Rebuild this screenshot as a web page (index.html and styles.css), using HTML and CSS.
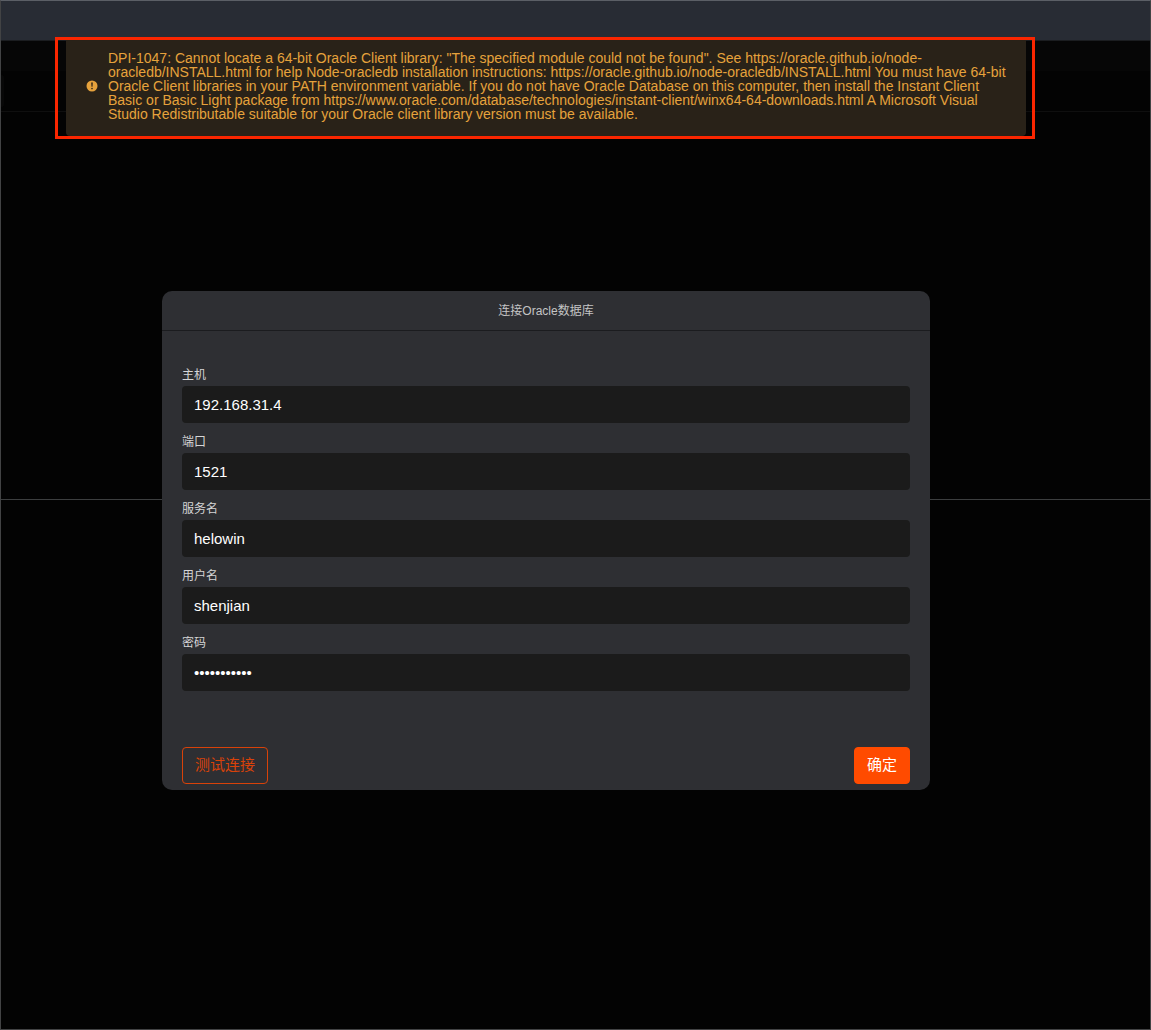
FILE: index.html
```html
<!DOCTYPE html>
<html lang="zh-CN">
<head>
    <meta charset="UTF-8">
    <meta name="viewport" content="width=device-width, initial-scale=1.0">
    <title>连接Oracle数据库</title>
    <link rel="stylesheet" href="styles.css">
</head>
<body>
    <div class="window">
        <header class="titlebar"></header>
        <main class="workspace">
            <div class="tabs"></div>
            <div class="toolbar"><span class="toolbar-item"></span></div>
            <div class="pane"></div>
            <div class="pane"></div>
        </main>
    </div>

    <div class="message-layer">
        <div class="highlight">
            <div class="message" role="alert">
                <svg class="message-icon" viewBox="0 0 12 12" aria-hidden="true">
                    <circle cx="6" cy="6" r="5.5" fill="#e6a23c"/>
                    <path d="M5.2 2.6h1.6L6.5 6.8h-1z" fill="#292218"/>
                    <circle cx="6" cy="8.6" r="0.8" fill="#292218"/>
                </svg>
                <p class="message-text">DPI-1047: Cannot locate a 64-bit Oracle Client library: "The specified module could not be found". See https://oracle.github.io/node-oracledb/INSTALL.html for help Node-oracledb installation instructions: https://oracle.github.io/node-oracledb/INSTALL.html You must have 64-bit Oracle Client libraries in your PATH environment variable. If you do not have Oracle Database on this computer, then install the Instant Client Basic or Basic Light package from https://www.oracle.com/database/technologies/instant-client/winx64-64-downloads.html A Microsoft Visual Studio Redistributable suitable for your Oracle client library version must be available.</p>
            </div>
        </div>
    </div>

    <div class="dialog-layer">
        <form class="dialog">
            <h1 class="dialog-title">连接Oracle数据库</h1>
            <div class="dialog-body">
                <div class="field">
                    <label for="host">主机</label>
                    <input type="text" id="host" value="192.168.31.4">
                </div>
                <div class="field">
                    <label for="port">端口</label>
                    <input type="text" id="port" value="1521">
                </div>
                <div class="field">
                    <label for="service">服务名</label>
                    <input type="text" id="service" value="helowin">
                </div>
                <div class="field">
                    <label for="user">用户名</label>
                    <input type="text" id="user" value="shenjian">
                </div>
                <div class="field">
                    <label for="password">密码</label>
                    <input type="password" id="password" value="helowin1521">
                </div>
            </div>
            <div class="dialog-footer">
                <button type="button" class="btn btn-outline">测试连接</button>
                <button type="submit" class="btn btn-primary">确定</button>
            </div>
        </form>
    </div>
</body>
</html>
```

FILE: styles.css
```css
* {
    box-sizing: border-box;
}

body {
    margin: 0;
    font-family: "Liberation Sans", "Noto Sans CJK SC", sans-serif;
    background-color: #030303;
    color: #fff;
}

.window {
    display: flex;
    flex-direction: column;
    height: 100vh;
    border: 1px solid #424344;
    border-top-color: #5b5f66;
}

.titlebar {
    height: 40px;
    background-color: #282c34;
    border-bottom: 1px solid #1b1d20;
}

.workspace {
    flex: 1;
    display: flex;
    flex-direction: column;
}

.tabs {
    height: 30px;
    background-color: #060606;
}

.toolbar {
    display: flex;
    height: 41px;
    padding: 4px 0;
    border-bottom: 1px solid #0f0f0f;
}

.toolbar-item {
    width: 3px;
    background-color: #080808;
    border-radius: 0 3px 3px 0;
}

.pane {
    flex: 1;
}

.pane + .pane {
    flex: 0 0 530px;
    border-top: 1px solid #3c3e3f;
}

.message-layer,
.dialog-layer {
    position: absolute;
    top: 0;
    left: 0;
    right: 0;
    display: flex;
    justify-content: center;
}

/* error message with its red frame */
.message-layer {
    padding-top: 37px;
    padding-right: 61px;
    z-index: 2;
}

.highlight {
    width: 100%;
    max-width: 980px;
    padding: 0 6px 0 8px;
    border: 3px solid #fa2600;
}

.message {
    display: flex;
    align-items: center;
    gap: 10px;
    padding: 11px 15px 15px 20px;
    background-color: #292218;
    border-radius: 0 0 4px 4px;
    color: #e6a23c;
}

.message-icon {
    flex: none;
    width: 12px;
    height: 12px;
}

.message-text {
    margin: 0;
    font-size: 14px;
    line-height: 14px;
}

/* connection dialog */
.dialog-layer {
    padding-top: 291px;
    padding-right: 59px;
}

.dialog {
    width: 100%;
    max-width: 768px;
    background-color: #2e2f33;
    border-radius: 10px;
}

.dialog-title {
    margin: 0;
    height: 40px;
    border-bottom: 1px solid #1b1c1f;
    font-size: 12px;
    line-height: 40px;
    font-weight: normal;
    text-align: center;
    color: #c4c4c5;
}

.dialog-body {
    display: flex;
    flex-direction: column;
    gap: 8px;
    padding: 33px 20px 0;
}

.field label {
    display: block;
    font-size: 12px;
    line-height: 22px;
    color: #d5d5d6;
}

.field input {
    display: block;
    width: 100%;
    height: 37px;
    padding: 0 12px;
    border: none;
    border-radius: 4px;
    background-color: #1b1b1b;
    color: #fff;
    font-family: inherit;
    font-size: 15px;
    outline: none;
}

.dialog-footer {
    display: flex;
    justify-content: space-between;
    padding: 56px 20px 6px;
}

.btn {
    height: 37px;
    padding: 0 12px 4px;
    border: 1px solid #ff4b00;
    border-radius: 4px;
    font-family: inherit;
    font-size: 15px;
    cursor: pointer;
}

.btn-outline {
    background-color: transparent;
    border-color: #d84209;
    color: #d84209;
}

.btn-primary {
    background-color: #ff4b00;
    color: #fff;
}
```
